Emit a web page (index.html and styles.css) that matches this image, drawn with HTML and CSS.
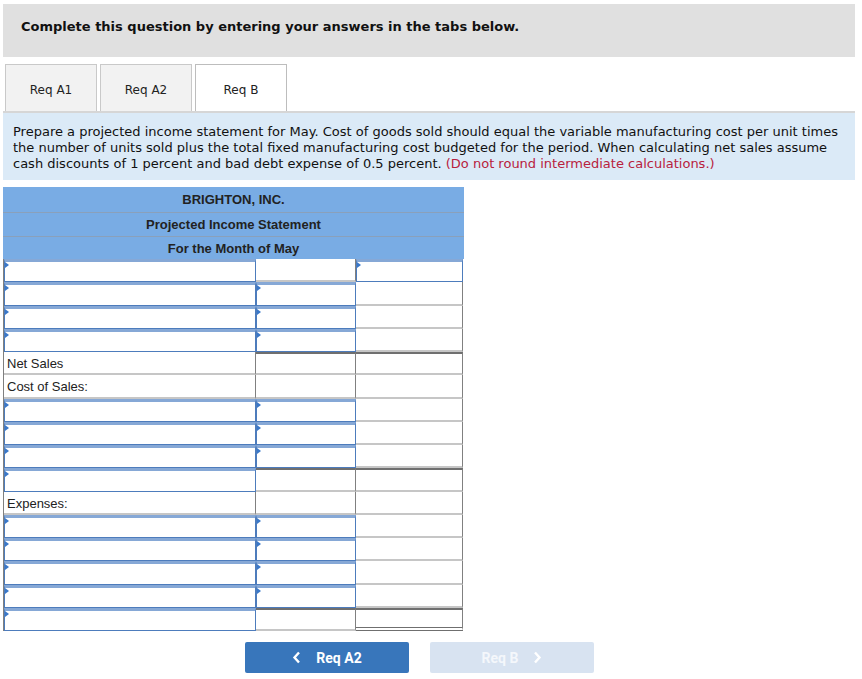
FILE: index.html
```html
<!DOCTYPE html>
<html lang="en">
<head>
  <meta charset="UTF-8">
  <title>Req B</title>
  <link rel="stylesheet" href="styles.css">
</head>
<body>
  <div class="page">
    <div class="q-header">Complete this question by entering your answers in the tabs below.</div>

    <div class="tabs">
      <div class="tab">Req A1</div>
      <div class="tab">Req A2</div>
      <div class="tab active">Req B</div>
    </div>

    <div class="instructions">
      Prepare a projected income statement for May. Cost of goods sold should equal the variable manufacturing cost per unit times<br>
      the number of units sold plus the total fixed manufacturing cost budgeted for the period. When calculating net sales assume<br>
      cash discounts of 1 percent and bad debt expense of 0.5 percent. <span class="note">(Do not round intermediate calculations.)</span>
    </div>

    <div class="statement">
      <div class="stmt-title first">BRIGHTON, INC.</div>
      <div class="stmt-title">Projected Income Statement</div>
      <div class="stmt-title last">For the Month of May</div>

      <div class="stmt-body">
        <!-- revenue -->
        <div class="cell field"></div><div class="cell"></div><div class="cell field"></div>
        <div class="cell field"></div><div class="cell field"></div><div class="cell"></div>
        <div class="cell field"></div><div class="cell field"></div><div class="cell"></div>
        <div class="cell field"></div><div class="cell field"></div><div class="cell"></div>
        <div class="cell label">Net Sales</div><div class="cell total"></div><div class="cell total"></div>

        <!-- cost of sales -->
        <div class="cell label">Cost of Sales:</div><div class="cell"></div><div class="cell"></div>
        <div class="cell field"></div><div class="cell field"></div><div class="cell"></div>
        <div class="cell field"></div><div class="cell field"></div><div class="cell"></div>
        <div class="cell field"></div><div class="cell field"></div><div class="cell"></div>
        <div class="cell field"></div><div class="cell total"></div><div class="cell total"></div>

        <!-- expenses -->
        <div class="cell label">Expenses:</div><div class="cell"></div><div class="cell"></div>
        <div class="cell field"></div><div class="cell field"></div><div class="cell"></div>
        <div class="cell field"></div><div class="cell field"></div><div class="cell"></div>
        <div class="cell field"></div><div class="cell field"></div><div class="cell"></div>
        <div class="cell field"></div><div class="cell field"></div><div class="cell"></div>
        <div class="cell field"></div><div class="cell total"></div><div class="cell total final"></div>
      </div>
    </div>

    <div class="nav">
      <button class="nav-btn">
        <svg width="9" height="13" viewBox="0 0 9 13"><path d="M7 1.5L2.5 6.5L7 11.5" fill="none" stroke="#fff" stroke-width="2.4"/></svg>
        Req A2
      </button>
      <button class="nav-btn disabled">
        Req B
        <svg width="9" height="13" viewBox="0 0 9 13"><path d="M2 1.5L6.5 6.5L2 11.5" fill="none" stroke="#fff" stroke-width="2.4"/></svg>
      </button>
    </div>
  </div>
</body>
</html>
```

FILE: styles.css
```css
body {
  margin: 0;
  background: #fff;
  font-family: "DejaVu Sans", Verdana, sans-serif;
  color: #111;
}
.page {
  padding: 4px 7px 0 3px;
}
.q-header {
  background: #e0e0e0;
  height: 53px;
  box-sizing: border-box;
  padding: 15px 18px 0;
  font-size: 13px;
  font-weight: bold;
  color: #111;
}
.tabs {
  display: flex;
  gap: 3px;
  margin-top: 7px;
  padding-left: 2px;
  border-bottom: 2px solid #d6d6d6;
}
.tab {
  width: 92px;
  height: 47px;
  box-sizing: border-box;
  border: 1px solid #c9c9c9;
  border-bottom: none;
  background: #f2f2f2;
  font-size: 12px;
  color: #222;
  display: flex;
  align-items: center;
  justify-content: center;
  padding-top: 4px;
}
.tab.active {
  background: #fff;
  border-color: #bdbdbd;
}
.instructions {
  background: #dbeaf7;
  padding: 11px 10px 8px;
  font-size: 13px;
  line-height: 16px;
  white-space: nowrap;
  color: #111;
}
.note {
  color: #b8213d;
}
.statement {
  width: 461px;
  margin-top: 7px;
  font-family: "Liberation Sans", Arial, sans-serif;
}
.stmt-title {
  background: #79ace4;
  text-align: center;
  font-size: 13px;
  font-weight: bold;
  color: #222;
  height: 23px;
  line-height: 24px;
  border-top: 1px solid #8aa0ba;
}
.stmt-title.first {
  height: 25px;
  line-height: 26px;
  border-top: none;
}
.stmt-title.last {
  height: 22px;
  line-height: 23px;
}
.stmt-body {
  display: grid;
  grid-template-columns: 252px 100px 107px;
  grid-auto-rows: 23.25px;
  border-left: 1px solid #7f7f7f;
}
.cell {
  position: relative;
  box-sizing: border-box;
  border-right: 1px solid #808080;
  border-bottom: 2px solid #c6c6c6;
  background: #fff;
}
.cell.label {
  font-size: 13px;
  color: #222;
  padding: 4px 0 0 3px;
}
.cell.total {
  border-top: 2px solid #6f6f6f;
}
.cell.final {
  border-bottom: 4px double #6f6f6f;
}
.cell.field {
  border: 1px solid #4d7cbc;
  border-top: 3px solid #86a8d6;
}
.cell.field::before {
  content: "";
  position: absolute;
  left: 0;
  top: 0;
  border-left: 4px solid #3a78c9;
  border-top: 3px solid transparent;
  border-bottom: 3px solid transparent;
}
.nav {
  display: flex;
  justify-content: center;
  gap: 21px;
  width: 833px;
  margin-top: 11px;
}
.nav-btn {
  width: 164px;
  height: 31px;
  border: none;
  border-radius: 2px;
  background: #3876bb;
  color: #fff;
  font-family: Roboto, "Liberation Sans", sans-serif;
  font-size: 14px;
  font-weight: bold;
  display: flex;
  align-items: center;
  justify-content: center;
  gap: 15px;
  padding: 0;
}
.nav-btn.disabled {
  background: #d8e3f1;
  color: #f4f7fb;
}
```
